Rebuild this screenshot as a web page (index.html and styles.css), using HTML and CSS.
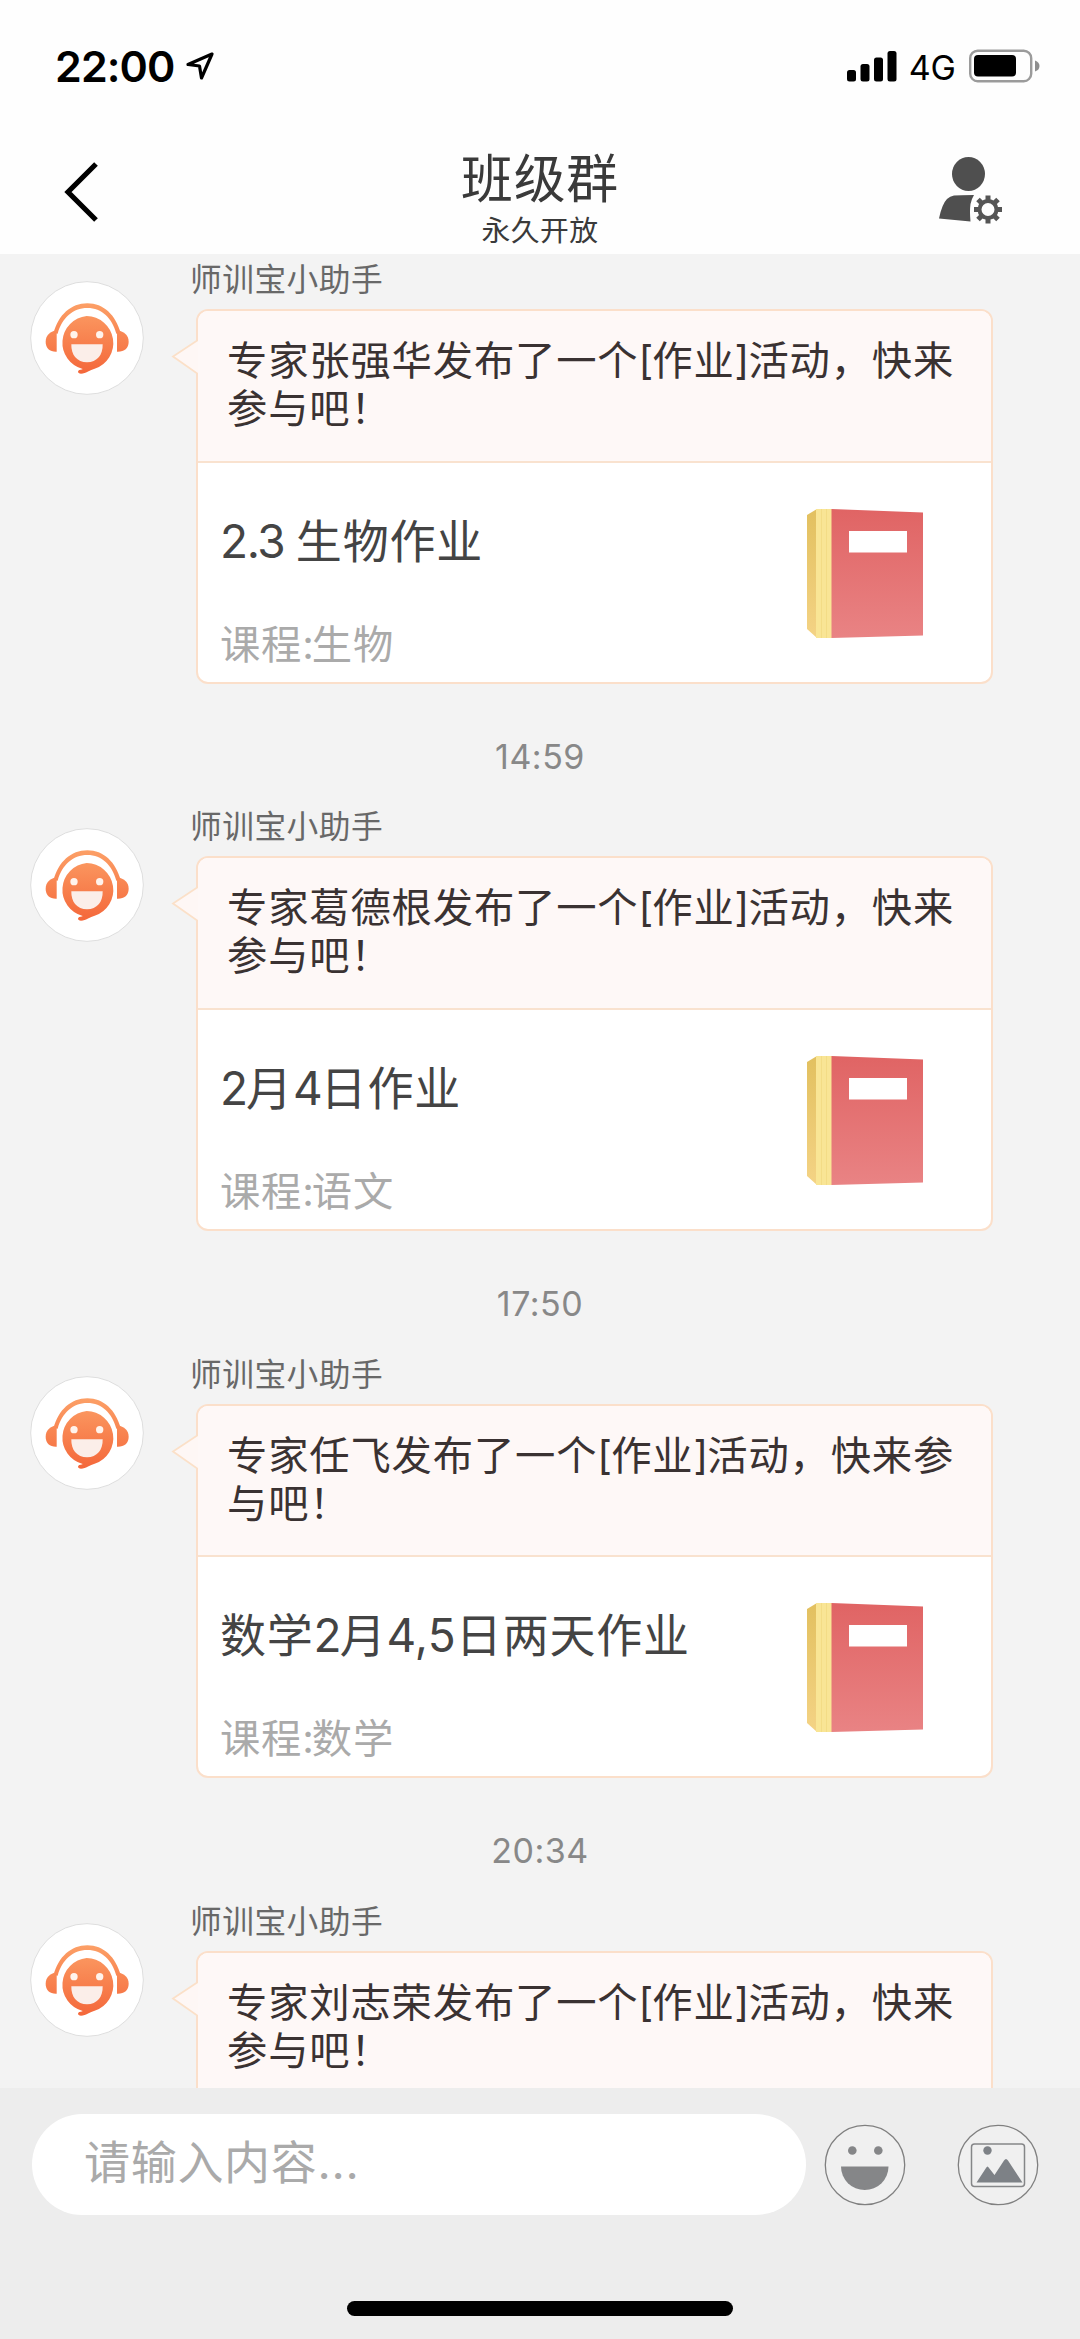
FILE: index.html
```html
<!DOCTYPE html>
<html lang="zh-CN">
<head>
<meta charset="utf-8">
<title>班级群</title>
<link rel="stylesheet" href="styles.css">
</head>
<body>
<svg class="defs" width="0" height="0" aria-hidden="true">
  <defs>
    <linearGradient id="orange" gradientUnits="userSpaceOnUse" x1="0" y1="100" x2="0" y2="310">
      <stop offset="0" stop-color="#fc9f66"/>
      <stop offset="1" stop-color="#f4673a"/>
    </linearGradient>
    <linearGradient id="cover" x1="0" y1="0" x2="0" y2="1">
      <stop offset="0" stop-color="#e06464"/>
      <stop offset="1" stop-color="#e98384"/>
    </linearGradient>
    <linearGradient id="spine" x1="0" y1="0" x2="0" y2="1">
      <stop offset="0" stop-color="#e2c05f"/>
      <stop offset="1" stop-color="#f4d385"/>
    </linearGradient>
    <symbol id="helper" viewBox="31 32 342 342">
      <circle cx="202" cy="203" r="169" fill="#fff" stroke="#dedede" stroke-width="3"/>
      <g fill="url(#orange)">
        <path d="M102 188C116 134 154 99 203 99S288 134 303 188L290 190C277 143 247 113 203 113S127 143 114 190Z"/>
        <path d="M111 180C90 184 78 196 78 214C78 234 91 245 111 244Z"/>
        <path d="M292 180C315 184 327 196 327 214C327 234 313 245 292 244Z"/>
        <path d="M201 137A81 81 0 0 1 225 295C207 300 200 309 184 310C175 310 172 303 179 299C184 297 189 298 189 296A81 81 0 0 1 201 137Z"/>
      </g>
      <circle cx="163" cy="193" r="11" fill="#fff3ec"/>
      <circle cx="240" cy="193" r="11" fill="#fff3ec"/>
      <path d="M155 222H249C250 254 232 276 202 276S154 254 155 222Z" fill="#fbeee9"/>
    </symbol>
    <symbol id="book" viewBox="0 0 116 130">
      <path d="M0 6L10 0V129L0 120Z" fill="url(#spine)"/>
      <path d="M9 0H25V129H9Z" fill="#f9e595"/>
      <path d="M14.500 0V129M19.500 0V129" stroke="#f3dc86" stroke-width="1"/>
      <path d="M24.500 0L116 3.500V126.500L24.500 129Z" fill="url(#cover)"/>
      <path d="M42 22H100V43.500H42Z" fill="#fff"/>
    </symbol>
  </defs>
</svg>
<div class="screen">
  <header class="top">
    <div class="status">
      <div class="status-left">
        <span class="clock">22:00</span>
        <svg class="locate" width="30" height="30" viewBox="0 0 30 30"><path d="M27 3L3 13.500L14.500 15L16.500 27Z" fill="none" stroke="#000" stroke-width="3.200" stroke-linejoin="round"/></svg>
      </div>
      <div class="status-right">
        <svg width="50" height="32" viewBox="0 0 50 32"><rect x="0" y="20" width="9" height="11.500" rx="2.500"/><rect x="13.500" y="14" width="9" height="17.500" rx="2.500"/><rect x="27" y="7.500" width="9" height="24" rx="2.500"/><rect x="40.500" y="1" width="9" height="30.500" rx="2.500"/></svg>
        <span class="network">4G</span>
        <svg class="battery" width="72" height="34" viewBox="0 0 72 34"><rect x="1.200" y="1.700" width="61" height="30.500" rx="7.500" fill="none" stroke="#9b9b9b" stroke-width="2.400"/><rect x="5" y="6" width="42" height="21.500" rx="4"/><path d="M66 11.500Q70.500 13 70.500 17T66 22.500Z" fill="#8e8e8e"/></svg>
      </div>
    </div>
    <div class="nav">
      <svg width="36" height="60" viewBox="0 0 36 60"><path d="M32 2L4 30L32 58" fill="none" stroke="#000" stroke-width="5.200"/></svg>
      <div class="heading">
        <h1 class="title">班级群</h1>
        <p class="subtitle">永久开放</p>
      </div>
      <svg class="member" width="64" height="68" viewBox="0 0 64 68">
        <g fill="#4f4f4f">
          <ellipse cx="29.500" cy="17" rx="16.500" ry="17"/>
          <path d="M15 38.500Q20 38 35 38Q32.500 42 31.500 47Q30.500 54 31.500 64.500L0 61.500Q3 47 8 42Q11 39 15 38.500Z"/>
        </g>
        <g transform="translate(49 52.500)" fill="none" stroke="#555">
          <circle r="8.500" stroke-width="4"/>
          <path d="M0-9V-14M0 9V14M-9 0H-14M9 0H14M6.400-6.400L10-10M-6.400-6.400L-10-10M6.400 6.400L10 10M-6.400 6.400L-10 10" stroke-width="5"/>
        </g>
      </svg>
    </div>
  </header>

  <main class="chat">
    <section class="message">
      <svg class="avatar"><use href="#helper"/></svg>
      <div class="content">
        <div class="name">师训宝小助手</div>
        <article class="bubble">
          <svg class="tail" width="27" height="38" viewBox="0 0 27 38"><path d="M27 2L2 18.500L27 36" fill="#fef7f5" stroke="#fbe0c8" stroke-width="1.800"/></svg>
          <p class="notice">专家张强华发布了一个<span class="bracket">[</span>作业<span class="bracket">]</span>活动，快来参与吧！</p>
          <div class="task">
            <div><h2 class="task-title"><span class="decimal">2.3 </span>生物作业</h2><p class="course">课程<span class="colon">:</span>生物</p></div>
            <svg class="book"><use href="#book"/></svg>
          </div>
        </article>
      </div>
    </section>
    <time class="time">14:59</time>

    <section class="message">
      <svg class="avatar"><use href="#helper"/></svg>
      <div class="content">
        <div class="name">师训宝小助手</div>
        <article class="bubble">
          <svg class="tail" width="27" height="38" viewBox="0 0 27 38"><path d="M27 2L2 18.500L27 36" fill="#fef7f5" stroke="#fbe0c8" stroke-width="1.800"/></svg>
          <p class="notice">专家葛德根发布了一个<span class="bracket">[</span>作业<span class="bracket">]</span>活动，快来参与吧！</p>
          <div class="task">
            <div><h2 class="task-title"><span class="digit">2</span>月<span class="digit">4</span>日作业</h2><p class="course">课程<span class="colon">:</span>语文</p></div>
            <svg class="book"><use href="#book"/></svg>
          </div>
        </article>
      </div>
    </section>
    <time class="time">17:50</time>

    <section class="message">
      <svg class="avatar"><use href="#helper"/></svg>
      <div class="content">
        <div class="name">师训宝小助手</div>
        <article class="bubble">
          <svg class="tail" width="27" height="38" viewBox="0 0 27 38"><path d="M27 2L2 18.500L27 36" fill="#fef7f5" stroke="#fbe0c8" stroke-width="1.800"/></svg>
          <p class="notice">专家任飞发布了一个<span class="bracket">[</span>作业<span class="bracket">]</span>活动，快来参与吧！</p>
          <div class="task">
            <div><h2 class="task-title">数学<span class="digit">2</span>月<span class="list">4,5</span>日两天作业</h2><p class="course">课程<span class="colon">:</span>数学</p></div>
            <svg class="book"><use href="#book"/></svg>
          </div>
        </article>
      </div>
    </section>
    <time class="time">20:34</time>

    <section class="message">
      <svg class="avatar"><use href="#helper"/></svg>
      <div class="content">
        <div class="name">师训宝小助手</div>
        <article class="bubble">
          <svg class="tail" width="27" height="38" viewBox="0 0 27 38"><path d="M27 2L2 18.500L27 36" fill="#fef7f5" stroke="#fbe0c8" stroke-width="1.800"/></svg>
          <p class="notice">专家刘志荣发布了一个<span class="bracket">[</span>作业<span class="bracket">]</span>活动，快来参与吧！</p>
        </article>
      </div>
    </section>
  </main>

  <footer class="composer">
    <div class="tools">
      <div class="input">请输入内容...</div>
      <svg class="tool" width="82" height="82" viewBox="-41 -41 82 82">
        <circle r="39.700" fill="#f0f0f0" stroke="#808080" stroke-width="1.300"/>
        <g fill="#858688"><circle cx="-12.700" cy="-14.500" r="4.300"/><circle cx="13.300" cy="-14.500" r="4.300"/><path d="M-24 1.500H23.500A23.700 23.500 0 0 1-24 1.500Z"/></g>
      </svg>
      <svg class="tool" width="82" height="82" viewBox="-41 -41 82 82">
        <circle r="39.700" fill="#f0f0f0" stroke="#808080" stroke-width="1.300"/>
        <rect x="-26.500" y="-21" width="53" height="42.500" rx="3" fill="none" stroke="#858688" stroke-width="1.500"/>
        <g fill="#7d8186"><circle cx="-10.500" cy="-14.500" r="4.200"/><path d="M-21.500 17.500L-12 3Q-10.500 0-9 3L-3.500 10L6-4.500Q8-7.500 10-4.500L24.500 17.500Z"/></g>
      </svg>
    </div>
    <div class="home"></div>
  </footer>
</div>
</body>
</html>
```
FILE: styles.css
```css
* {
  box-sizing: border-box;
}

body,
h1,
h2,
p {
  margin: 0;
  font-weight: 400;
}

body {
  background: #f3f3f3;
  font-family: Inter, "Noto Sans CJK SC", sans-serif;
}

.defs {
  position: absolute;
}

.screen {
  display: flex;
  flex-direction: column;
  width: 1080px;
  height: 2339px;
  overflow: hidden;
}

.top {
  flex: none;
  height: 254px;
  background: #fefefe;
}

.status {
  display: flex;
  justify-content: space-between;
  height: 132px;
  padding: 0 39px 0 55px;
}

.status-left,
.status-right {
  display: flex;
  align-items: center;
}

.clock {
  font-size: 43px;
  font-weight: 600;
  letter-spacing: -0.900px;
}

.locate {
  margin-left: 10px;
}

.network {
  margin: 2px 13px 0 12px;
  font-size: 34px;
}

.nav {
  display: flex;
  justify-content: space-between;
  height: 122px;
  padding: 30px 77px 0 64px;
}

.heading {
  margin-top: -13px;
  margin-left: 41px;
  text-align: center;
  color: #3a3a3a;
}

.title {
  font-size: 51.800px;
  line-height: 60px;
  letter-spacing: 0.900px;
}

.subtitle {
  font-size: 28.800px;
  line-height: 44px;
  letter-spacing: 0.400px;
}

.member {
  margin-top: -5px;
}

.chat {
  flex: none;
  height: 1834px;
  overflow: hidden;
}

.message {
  display: flex;
}

.avatar {
  flex: none;
  width: 114px;
  height: 114px;
  margin: 27px 48.500px 0 29.500px;
}

.name {
  height: 55px;
  margin-left: -2px;
  color: #686868;
  font-size: 31.700px;
  line-height: 52px;
  letter-spacing: 0.500px;
}

.bubble {
  position: relative;
  width: 797px;
  margin-left: 4px;
  border: 2px solid #fbdfca;
  border-radius: 12px;
  background: #fff;
}

.tail {
  position: absolute;
  left: -27px;
  top: 27px;
}

.notice {
  height: 151.500px;
  padding: 26px 30px 0 29px;
  border-bottom: 2px solid #f9e2cf;
  border-radius: 10px 10px 0 0;
  background: #fef8f7;
  color: #3a3232;
  font-size: 40.300px;
  line-height: 48px;
  letter-spacing: 0.850px;
}

.bracket {
  letter-spacing: -0.900px;
}

.task {
  display: flex;
  justify-content: space-between;
  height: 219px;
  padding: 46px 68px 0 22px;
}

.task-title {
  color: #444;
  font-size: 46px;
  line-height: 64px;
  letter-spacing: 0.800px;
}

.decimal {
  letter-spacing: -1.400px;
}

.digit {
  letter-spacing: -2px;
}

.list {
  letter-spacing: 0.200px;
}

.course {
  margin-top: 44px;
  color: #aaa;
  font-size: 40.300px;
  line-height: 56px;
  letter-spacing: 0.800px;
}

.colon {
  letter-spacing: -2px;
}

.book {
  width: 116px;
  height: 130px;
}

.time {
  display: block;
  height: 117.900px;
  padding-top: 49px;
  color: #888;
  font-size: 34px;
  line-height: 48px;
  letter-spacing: 0.500px;
  text-align: center;
}

.composer {
  flex: 1;
  display: flex;
  flex-direction: column;
  align-items: center;
  justify-content: space-between;
  padding: 26px 0 23px;
  background: #ededed;
}

.tools {
  display: flex;
  align-items: center;
  width: 1080px;
  padding-left: 32px;
}

.input {
  flex: none;
  width: 774px;
  height: 101px;
  margin-right: 18px;
  padding-left: 52px;
  border-radius: 51px;
  background: #fff;
  color: #aaa;
  font-size: 46px;
  line-height: 96px;
  letter-spacing: 0.700px;
}

.tool {
  flex: none;
}

.tool + .tool {
  margin-left: 51px;
}

.home {
  width: 386px;
  height: 15px;
  border-radius: 8px;
  background: #000;
}
```
